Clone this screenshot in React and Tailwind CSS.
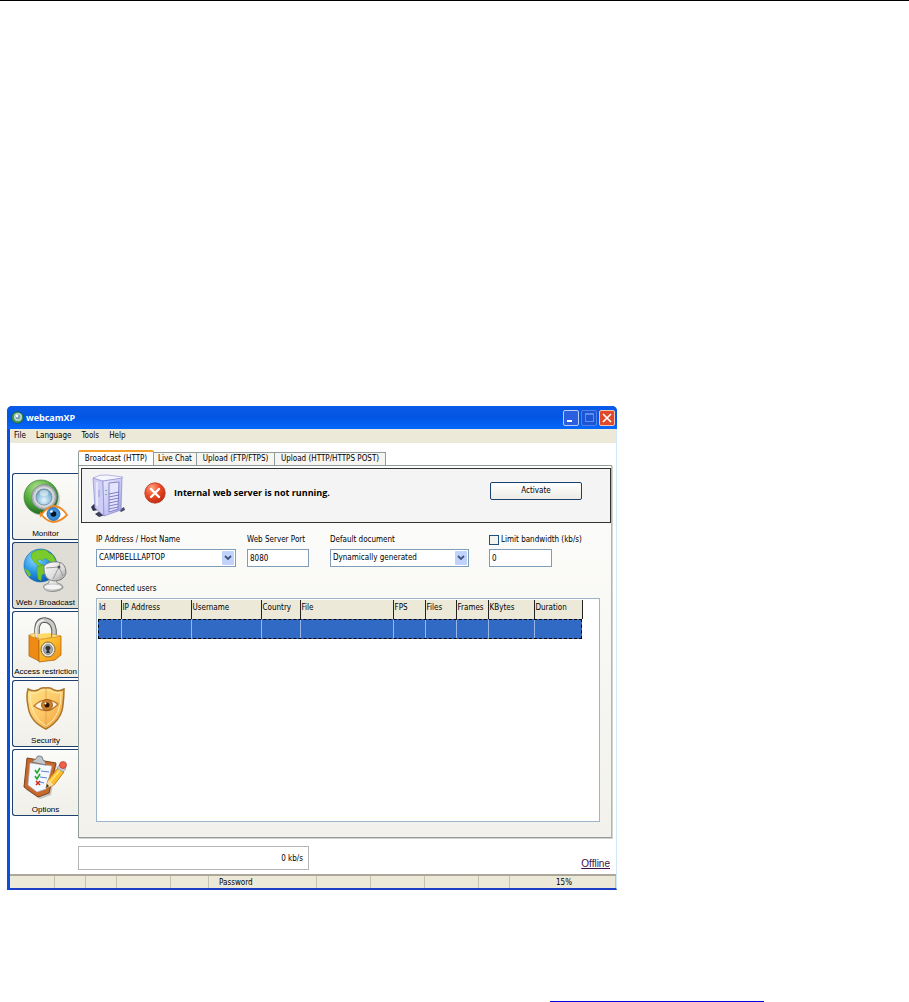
import React, { useState } from "react";

const MonitorIcon = () => (
    <svg width="46" height="46" viewBox="0 0 46 46">
        <defs>
            <radialGradient id="camBody" cx="0.4" cy="0.25" r="0.8">
                <stop offset="0" stopColor="#b4e48c" />
                <stop offset="0.5" stopColor="#55ad40" />
                <stop offset="1" stopColor="#1b6420" />
            </radialGradient>
            <radialGradient id="camLens" cx="0.5" cy="0.7" r="0.7">
                <stop offset="0" stopColor="#e8f7fd" />
                <stop offset="0.6" stopColor="#8fc0dc" />
                <stop offset="1" stopColor="#5d8fac" />
            </radialGradient>
        </defs>
        <circle cx="20" cy="20" r="17" fill="#777" opacity="0.3" />
        <circle cx="18" cy="18" r="17" fill="url(#camBody)" stroke="#3a8030" strokeWidth="0.7" />
        <circle cx="21" cy="18" r="12.5" fill="#b0b5bb" stroke="#7b858e" strokeWidth="0.8" />
        <circle cx="21" cy="18" r="10.5" fill="#d3d7da" />
        <circle cx="21" cy="18" r="8" fill="url(#camLens)" stroke="#6b90a8" strokeWidth="0.8" />
        <ellipse cx="21" cy="14" rx="4.5" ry="3" fill="#fff" opacity="0.5" />
        <path d="M18 36 Q24 28 31 27 Q39 28 44 36 Q37 43 30 43 Q23 42 18 35Z" fill="#fff" stroke="#ef8a24" strokeWidth="1.8" />
        <circle cx="30.5" cy="35" r="6.5" fill="#3b8ed8" stroke="#1c5c9f" strokeWidth="0.8" />
        <circle cx="30.5" cy="35" r="2.8" fill="#06121f" />
        <circle cx="28.5" cy="32.5" r="1.3" fill="#fff" />
    </svg>
);

const BroadcastIcon = () => (
    <svg width="46" height="46" viewBox="0 0 46 46">
        <defs>
            <radialGradient id="sea" cx="0.35" cy="0.3" r="0.8">
                <stop offset="0" stopColor="#8fdcfb" />
                <stop offset="0.5" stopColor="#2796e6" />
                <stop offset="1" stopColor="#0b4da8" />
            </radialGradient>
            <linearGradient id="dish" x1="0" y1="0" x2="1" y2="1">
                <stop offset="0" stopColor="#fff" />
                <stop offset="0.6" stopColor="#dcdcdc" />
                <stop offset="1" stopColor="#909090" />
            </linearGradient>
        </defs>
        <circle cx="17.5" cy="17.5" r="16.5" fill="url(#sea)" stroke="#1868b5" strokeWidth="0.6" />
        <path d="M9 5 Q14 1 23 2 L26 5 L30 7 L33 13 L29 15 L25 12 L22 10 L19 13 L17 11 L14 13 L17 16 L20 17 L17 19 L11 14 L8 9Z" fill="#7ccb2e" stroke="#4a9c1c" strokeWidth="0.5" />
        <path d="M14 19 L20 17 L24 20 L22 25 L19 27 L18 33 L15 31 L14 25Z" fill="#74c52a" stroke="#4a9c1c" strokeWidth="0.5" />
        <path d="M1 20 L6 23 L8 27 L6 29Z" fill="#74c52a" />
        <path d="M26 31 L33 31 L34 35 Q40 36 40 40 Q34 45 25 43 Q19 41 21 37 L26 35Z" fill="url(#dish)" stroke="#777" strokeWidth="0.7" />
        <ellipse cx="30" cy="39" rx="9" ry="3" fill="#f4f4f4" stroke="#999" strokeWidth="0.5" />
        <path d="M21 18 Q20 32 31 33 Q41 33 43 25 Q43 15 35 14 Q26 13 21 18Z" fill="url(#dish)" stroke="#777" strokeWidth="0.9" />
        <path d="M23 20 L36 19 L40 28 M36 19 L30 31 M36 19 L37 15" stroke="#888" strokeWidth="0.8" fill="none" />
        <circle cx="36" cy="19" r="1.5" fill="#555" />
    </svg>
);

const LockIcon = () => (
    <svg width="46" height="46" viewBox="0 0 46 46">
        <defs>
            <linearGradient id="lockBody" x1="0" y1="0" x2="1" y2="1">
                <stop offset="0" stopColor="#ffd34a" />
                <stop offset="0.5" stopColor="#fcb527" />
                <stop offset="1" stopColor="#f08a14" />
            </linearGradient>
        </defs>
        <path d="M14 22 V13 Q14 3 22 3 Q30 4 31 13 V24" fill="none" stroke="#5b5b5b" strokeWidth="5.500" />
        <path d="M14 22 V13 Q14 3 22 3 Q30 4 31 13 V24" fill="none" stroke="#c8c8c8" strokeWidth="3.5" />
        <path d="M13 21 V12 Q14 4 21 3" fill="none" stroke="#fff" strokeWidth="1.2" />
        <path d="M6 18 L16 22 V44 L6 39Z" fill="#ef8b14" stroke="#b4660b" strokeWidth="0.8" />
        <path d="M16 22 L38 19 V38 L32 43 L16 45Z" fill="url(#lockBody)" stroke="#b4660b" strokeWidth="0.8" />
        <path d="M6 18 L12 16 V21 L16 22 L29 20 V17 L38 19 L16 23Z" fill="#ffe38a" stroke="#cf8516" strokeWidth="0.5" />
        <path d="M14 17 L28 16 L28 20 L16 22Z" fill="#ffd865" />
        <ellipse cx="25" cy="32.5" rx="7" ry="7.5" fill="#e4e4e0" stroke="#8a6a2a" strokeWidth="1" />
        <ellipse cx="25" cy="32.5" rx="4.500" ry="5" fill="#a8acb0" stroke="#777" strokeWidth="0.8" />
        <path d="M25 29 a2 2 0 0 1 1 4 l1 3 h-4 l1 -3 a2 2 0 0 1 1 -4Z" fill="#333" />
    </svg>
);

const ShieldIcon = () => (
    <svg width="46" height="46" viewBox="0 0 46 46">
        <defs>
            <linearGradient id="shieldFill" x1="0" y1="0" x2="1" y2="1">
                <stop offset="0" stopColor="#ffe487" />
                <stop offset="0.5" stopColor="#fdc96a" />
                <stop offset="1" stopColor="#ee9d36" />
            </linearGradient>
        </defs>
        <path d="M5 3 Q10 6 15 4 Q19 1 23 2 Q27 1 31 4 Q36 6 41 3 Q41 10 40 19 Q39 34 23 43 Q7 36 5 20 Q3 10 5 3Z" fill="url(#shieldFill)" stroke="#a9752b" strokeWidth="1.5" />
        <path d="M7 7 Q12 8 16 6 Q20 3 23 4 Q27 4 30 6 Q35 8 38 6 Q39 30 23 40 Q7 31 7 7Z" fill="none" stroke="#ffedb0" strokeWidth="1" />
        <path d="M23 3 V41" stroke="#dfa04a" strokeWidth="0.8" />
        <path d="M11 20 Q22 9 35 18 Q25 30 11 20Z" fill="#fff3dc" stroke="#c0792e" strokeWidth="1.3" />
        <circle cx="24" cy="19" r="5.5" fill="#cf8128" stroke="#8b5118" strokeWidth="0.8" />
        <circle cx="24" cy="19" r="2.5" fill="#2a1404" />
        <circle cx="22.5" cy="17.5" r="1" fill="#fff" />
    </svg>
);

const OptionsIcon = () => (
    <svg width="46" height="46" viewBox="0 0 46 46">
        <path d="M6 5 L34 9 L28 40 L17 44 L3 35Z" fill="#777" opacity="0.4" />
        <path d="M4 3 L33 8 L26 38 L15 42 L1 32Z" fill="#c56a2a" stroke="#81401a" strokeWidth="1" />
        <path d="M7 8 L29 11 L23 34 L14 37 L5 30Z" fill="#f4f8ff" stroke="#aab4cc" strokeWidth="0.6" />
        <path d="M9 7 Q11 4 13 4 Q14 0 17 1 Q20 1 20 5 Q23 6 23 10Z" fill="#c4c7ca" stroke="#6c7074" strokeWidth="0.8" />
        <path d="M18 16 L26 17 M17 22 L24 23 M17 27 L21 28" stroke="#5f86d8" strokeWidth="1.2" />
        <path d="M12 15 L14 18 L17 13 M12 21 L14 24 L17 19" fill="none" stroke="#2ba82c" strokeWidth="1.6" />
        <path d="M13 26 L17 30 M17 26 L13 30" stroke="#d3291c" strokeWidth="1.6" />
        <path d="M23 33 L25 25 L35 13 L41 17 L31 30Z" fill="#fcbf2c" stroke="#b8740d" strokeWidth="0.9" />
        <path d="M23 33 L25 25 L31 30Z" fill="#f5dcae" />
        <path d="M23 33 L24 29 L26 31Z" fill="#333" />
        <path d="M27 27 L37 15" stroke="#ffe48b" strokeWidth="1.2" />
        <path d="M34 13 L37 9 L43 14 L40 17Z" fill="#c5ced6" stroke="#7c858c" strokeWidth="0.6" />
        <circle cx="40" cy="10" r="3.500" fill="#f0604a" stroke="#a62918" strokeWidth="0.6" />
    </svg>
);

const ServerIcon = () => (
    <svg className="shrink-0" width="36" height="44" viewBox="0 0 36 44">
        <defs>
            <linearGradient id="tower" x1="0" y1="0" x2="1" y2="1">
                <stop offset="0" stopColor="#e9e9ff" />
                <stop offset="0.5" stopColor="#c9c9f6" />
                <stop offset="1" stopColor="#9c9ce0" />
            </linearGradient>
        </defs>
        <path d="M1 33 L4 30 L8 33 V36 L3 37Z" fill="#34344c" />
        <path d="M5 40 L10 37 L15 41 L9 43Z" fill="#3d3d58" />
        <path d="M29 36 L34 33 L35 36 L31 38Z" fill="#4a4a68" />
        <path d="M3 4 L13 7 L14 42 L5 34Z" fill="#cdcdf6" stroke="#8a8ace" strokeWidth="0.7" />
        <path d="M3 4 Q10 0 17 1 L33 3 L31 5 L13 7Z" fill="#f6f6ff" stroke="#9a9ad6" strokeWidth="0.7" />
        <path d="M13 7 L32 4 L31 36 L14 42Z" fill="url(#tower)" stroke="#8a8ace" strokeWidth="0.7" />
        <path d="M19 9 L29 8 L28 35 L19 38Z" fill="#e4e4ff" stroke="#7373bd" strokeWidth="0.8" />
        <path d="M19 20 L29 18 M19 23 L29 21 M19 26 L29 24 M19 29 L28 27 M19 32 L28 30 M19 35 L28 33" stroke="#7373bd" strokeWidth="0.9" />
        <path d="M16 16 V17 M16 20 V21" stroke="#39a55c" strokeWidth="1.2" />
        <path d="M7 8 V32" stroke="#f0f0ff" strokeWidth="1.5" />
        <path d="M9 16 V23" stroke="#9a9ad6" strokeWidth="1" />
    </svg>
);

const ErrorIcon = () => (
    <svg className="shrink-0" width="22" height="22" viewBox="0 0 22 22">
        <defs>
            <radialGradient id="errorFill" cx="0.35" cy="0.25" r="0.8">
                <stop offset="0" stopColor="#ffa584" />
                <stop offset="0.5" stopColor="#ee4a24" />
                <stop offset="1" stopColor="#bc2a10" />
            </radialGradient>
        </defs>
        <circle cx="11" cy="11" r="10.2" fill="url(#errorFill)" stroke="#b8341c" strokeWidth="0.8" />
        <path d="M7 7 L15 15 M15 7 L7 15" stroke="#fff" strokeWidth="2.4" strokeLinecap="round" />
    </svg>
);

const AppIcon = () => (
    <svg width="13" height="13" viewBox="0 0 13 13">
        <circle cx="6.5" cy="6.5" r="5.8" fill="#3f9d52" stroke="#1d5c3c" strokeWidth="0.8" />
        <circle cx="7" cy="6" r="4" fill="#c2d6d4" />
        <circle cx="7" cy="6" r="2.4" fill="#78a5b5" />
        <circle cx="6" cy="5" r="1.2" fill="#fff" />
    </svg>
);

const Chevron = () => (
    <span className="pointer-events-none absolute top-[2px] right-[2px] flex h-[14px] w-[12px] items-center justify-center rounded-[1px] bg-[#c1d3fb]">
        <svg width="8" height="6" viewBox="0 0 8 6">
            <path d="M1 1 L4 4 L7 1" fill="none" stroke="#3c5580" strokeWidth="1.8" />
        </svg>
    </span>
);

const sections = [
    { label: "Monitor", icon: MonitorIcon },
    { label: "Web / Broadcast", icon: BroadcastIcon },
    { label: "Access restriction", icon: LockIcon },
    { label: "Security", icon: ShieldIcon },
    { label: "Options", icon: OptionsIcon },
];

const tabs = [
    { label: "Broadcast (HTTP)", width: "w-[76px]" },
    { label: "Live Chat", width: "w-[43px]" },
    { label: "Upload (FTP/FTPS)", width: "w-[78px]" },
    { label: "Upload (HTTP/HTTPS POST)", width: "w-[111px]" },
];

const columns = [
    { label: "Id", width: "w-[23px]" },
    { label: "IP Address", width: "w-[70px]" },
    { label: "Username", width: "w-[70px]" },
    { label: "Country", width: "w-[39px]" },
    { label: "File", width: "w-[93px]" },
    { label: "FPS", width: "w-[32px]" },
    { label: "Files", width: "w-[31px]" },
    { label: "Frames", width: "w-[32px]" },
    { label: "KBytes", width: "w-[46px]" },
    { label: "Duration", width: "w-[48px]" },
];

const statusCells = [
    { width: "w-[45px]" },
    { width: "w-[31px]" },
    { width: "w-[31px]" },
    { width: "w-[54px]" },
    { width: "w-[38px]" },
    { width: "w-[108px]", text: "Password", pad: "pl-[10px]" },
    { width: "w-[54px]" },
    { width: "w-[54px]" },
    { width: "w-[54px]" },
    { width: "w-[31px]" },
    { width: "flex-1", text: "15%", pad: "pl-[46px]" },
];

const TitleBar = () => (
    <header className="flex h-[23px] items-center rounded-t-[5px] bg-linear-to-b from-[#0a5be6] via-[#0355e4] to-[#0468fd] pr-[2px] pl-1">
        <AppIcon />
        <h1 className="ml-[2px] flex-1 font-['Open_Sans',sans-serif] text-[9px] font-bold text-white">webcamXP</h1>
        <div className="flex gap-[2px]">
            <button aria-label="Minimize" className="flex h-4 w-4 items-end rounded-[2px] border border-[#b9cdf5] bg-[#2b5fe0] pb-[3px] pl-[3px]">
                <span className="h-[2px] w-[5px] bg-white" />
            </button>
            <button aria-label="Maximize" disabled className="flex h-4 w-4 items-center justify-center rounded-[2px] border border-[#4d83ea] bg-[#1d55d4]">
                <span className="h-[9px] w-[9px] border border-t-2 border-[#5c8df0]" />
            </button>
            <button aria-label="Close" className="flex h-4 w-4 items-center justify-center rounded-[2px] border border-[#f0c5b8] bg-[#e0482a]">
                <svg width="10" height="10" viewBox="0 0 10 10">
                    <path d="M1 1 L9 9 M9 1 L1 9" stroke="#fff" strokeWidth="1.7" />
                </svg>
            </button>
        </div>
    </header>
);

const Sidebar = ({ active, onSelect }) => (
    <aside className="flex w-[66px] shrink-0 flex-col gap-[2px] pt-[23px]">
        {sections.map(({ label, icon: Icon }, index) => (
            <button
                key={label}
                onClick={() => onSelect(index)}
                className={`flex h-[67px] flex-col items-center rounded-l-[3px] border border-r-0 border-[#1c4070] pt-[5px] font-['Liberation_Sans',sans-serif] text-[8px] leading-[10px] whitespace-nowrap text-black ${active === index ? "bg-[#dfddd5]" : "bg-linear-to-b from-[#fbfbf9] to-[#f0efe8]"}`}
            >
                <Icon />
                <span className="mt-[4px]">{label}</span>
            </button>
        ))}
    </aside>
);

const UsersTable = () => (
    <div className="mt-[3px] mr-[11px] h-[224px] border border-[#9db5cb] bg-white p-px">
        <table className="table-fixed border-collapse text-left">
            <thead>
                <tr className="h-[19px]">
                    {columns.map((col) => (
                        <th key={col.label} className={`${col.width} border-r border-[#222] bg-[#ece9d8] pl-px align-top leading-[16px] font-normal whitespace-nowrap`}>
                            {col.label}
                        </th>
                    ))}
                </tr>
            </thead>
            <tbody>
                <tr className="h-[20px] outline-1 -outline-offset-1 outline-dashed outline-black">
                    {columns.map((col) => (
                        <td key={col.label} className="border-r border-[#9ab6e6] bg-[#316ac5] last:border-r-0" />
                    ))}
                </tr>
            </tbody>
        </table>
    </div>
);

const BroadcastPanel = () => {
    const [port, setPort] = useState("8080");
    const [limit, setLimit] = useState("0");

    return (
        <div className="h-[373px] border border-[#919b9c] border-r-[#b5b5ae] bg-linear-to-b from-[#fdfdfc] to-[#f2f1eb] pt-[2px] pl-[2px] shadow-[1px_1px_0_#d5d4cc]">
            {/* Server state */}
            <div className="flex h-[55px] items-center border border-[#333] bg-[#f4f4f4] pr-[28px] pl-[8px]">
                <ServerIcon />
                <div className="ml-[18px] flex flex-1 items-center gap-[8px] pb-[5px]">
                    <ErrorIcon />
                    <strong className="font-['Open_Sans',sans-serif] text-[9px] whitespace-nowrap">Internal web server is not running.</strong>
                </div>
                <button className="mb-[10px] h-[18px] w-[92px] rounded-[2px] border border-[#1c4070] bg-linear-to-b from-white to-[#ecebe5]">
                    Activate
                </button>
            </div>

            {/* Server settings */}
            <div className="flex items-end pt-[11px] pl-[15px]">
                <div className="w-[151px]">
                    <label htmlFor="host" className="block">IP Address / Host Name</label>
                    <div className="relative mt-[3px] w-[140px]">
                        <select id="host" className="block h-[18px] w-full appearance-none border border-[#7f9db9] bg-white pl-[2px]">
                            <option>CAMPBELLLAPTOP</option>
                        </select>
                        <Chevron />
                    </div>
                </div>
                <div className="w-[83px]">
                    <label htmlFor="port" className="block">Web Server Port</label>
                    <input id="port" value={port} onChange={(e) => setPort(e.target.value)} className="mt-[3px] block h-[18px] w-[62px] border border-[#7f9db9] bg-white pl-[2px]" />
                </div>
                <div className="w-[159px]">
                    <label htmlFor="document" className="block">Default document</label>
                    <div className="relative mt-[3px] w-[139px]">
                        <select id="document" className="block h-[18px] w-full appearance-none border border-[#7f9db9] bg-white pl-[2px]">
                            <option>Dynamically generated</option>
                        </select>
                        <Chevron />
                    </div>
                </div>
                <div>
                    <label className="flex items-center gap-[2px] whitespace-nowrap">
                        <input type="checkbox" className="h-[10px] w-[10px] appearance-none border border-[#1c5180] bg-[#f3f3ef]" />
                        Limit bandwidth (kb/s)
                    </label>
                    <input aria-label="Bandwidth limit" value={limit} onChange={(e) => setLimit(e.target.value)} className="mt-[3px] block h-[18px] w-[63px] border border-[#7f9db9] bg-white pl-[2px]" />
                </div>
            </div>

            <section className="pt-[16px] pl-[15px]">
                <h2>Connected users</h2>
                <UsersTable />
            </section>
        </div>
    );
};

export default function App() {
    const [section, setSection] = useState(1);
    const [tab, setTab] = useState(0);

    return (
        <div className="flex min-h-screen flex-col justify-between border-t border-black bg-white">
            <div className="mt-[405px] ml-[7px] w-full max-w-[610px] rounded-t-[5px] bg-[#0a4fe0] font-['DejaVu_Sans_Condensed','DejaVu_Sans',sans-serif] text-[8px] leading-[12px] text-black">
                <TitleBar />
                <div className="ml-[3px] border-r border-b-2 border-r-[#cfe8fa] border-b-[#1a3fc4] bg-white">
                    <nav className="flex h-[14px] items-center gap-[10px] bg-[#ece9d8] pl-[4px]">
                        <button>File</button>
                        <button>Language</button>
                        <button>Tools</button>
                        <button>Help</button>
                    </nav>
                    <div className="flex pt-[7px] pr-[4px] pl-[2px]">
                        <Sidebar active={section} onSelect={setSection} />
                        <main className="min-w-0 flex-1">
                            <div className="flex h-[15px] items-end">
                                {tabs.map(({ label, width }, index) => (
                                    <button
                                        key={label}
                                        onClick={() => setTab(index)}
                                        className={`${width} border-r border-[#919b9c] whitespace-nowrap ${tab === index ? "h-[15px] rounded-t-[2px] border-t-2 border-l border-t-[#f5a02c] bg-white" : "h-[13px] border-t bg-[#f6f5f0]"}`}
                                    >
                                        {label}
                                    </button>
                                ))}
                            </div>
                            <BroadcastPanel />
                            <div className="flex items-end justify-between pt-[8px] pb-[4px]">
                                <div className="h-[24px] w-[231px] border border-[#b5b5b5] pr-[5px] text-right leading-[24px]">0 kb/s</div>
                                <a href="#status" className="mr-[2px] font-['Liberation_Sans',sans-serif] text-[10px] leading-[12px] text-[#3c1040] underline">Offline</a>
                            </div>
                        </main>
                    </div>
                    <footer className="flex h-[14px] border-t-2 border-[#aca899] bg-[#ece9d8]">
                        {statusCells.map((cell, index) => (
                            <div key={index} className={`${cell.width} ${cell.pad || ""} border-r border-[#c5c2b0] leading-[13px]`}>
                                {cell.text}
                            </div>
                        ))}
                    </footer>
                </div>
            </div>
            <div className="ml-[550px] w-[214px] border-b border-[#0000e0]" />
        </div>
    );
}
